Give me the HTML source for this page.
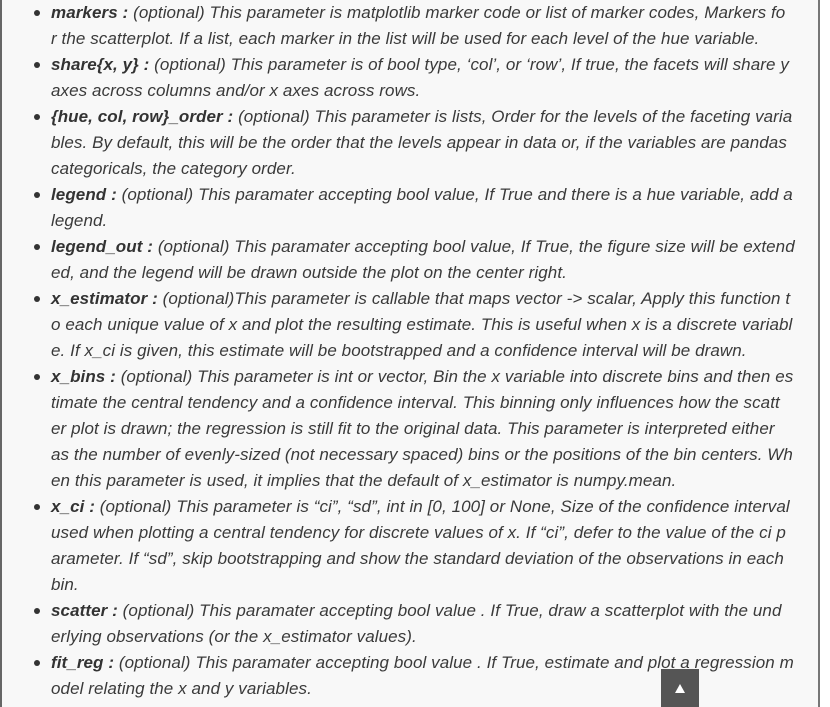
<!DOCTYPE html>
<html><head><meta charset="utf-8"><style>
html,body{margin:0;padding:0;width:830px;height:707px;overflow:hidden;}
body{background:#fff;position:relative;font-family:"Liberation Sans",sans-serif;}
.box{position:absolute;left:0;top:0;width:816px;height:707px;background:#f8f8f8;border-left:2px solid #666;border-right:2px solid #777;}
.l{position:absolute;left:51px;height:26px;line-height:26px;font-size:17px;font-style:italic;color:#3a3a3a;white-space:nowrap;letter-spacing:0.08px;}
.l b{font-weight:bold;color:#333;}
.d{position:absolute;left:-17px;top:10px;width:6px;height:6px;border-radius:50%;background:#333;}
.btn{position:absolute;left:661px;top:669px;width:38px;height:38px;background:#555;}
.btn:after{content:"";position:absolute;left:14px;top:15px;border-left:5px solid transparent;border-right:5px solid transparent;border-bottom:9px solid #fff;}
</style></head><body>
<div class="box"></div>
<div class="l" style="top:0px"><span class="d"></span><b>markers :</b> (optional) This parameter is matplotlib marker code or list of marker codes, Markers fo</div>
<div class="l" style="top:26px">r the scatterplot. If a list, each marker in the list will be used for each level of the hue variable.</div>
<div class="l" style="top:52px"><span class="d"></span><b>share{x, y} :</b> (optional) This parameter is of bool type, ‘col’, or ‘row’, If true, the facets will share y</div>
<div class="l" style="top:78px">axes across columns and/or x axes across rows.</div>
<div class="l" style="top:104px"><span class="d"></span><b>{hue, col, row}_order :</b> (optional) This parameter is lists, Order for the levels of the faceting varia</div>
<div class="l" style="top:130px">bles. By default, this will be the order that the levels appear in data or, if the variables are pandas</div>
<div class="l" style="top:156px">categoricals, the category order.</div>
<div class="l" style="top:182px"><span class="d"></span><b>legend :</b> (optional) This paramater accepting bool value, If True and there is a hue variable, add a</div>
<div class="l" style="top:208px">legend.</div>
<div class="l" style="top:234px"><span class="d"></span><b>legend_out :</b> (optional) This paramater accepting bool value, If True, the figure size will be extend</div>
<div class="l" style="top:260px">ed, and the legend will be drawn outside the plot on the center right.</div>
<div class="l" style="top:286px"><span class="d"></span><b>x_estimator :</b> (optional)This parameter is callable that maps vector -&gt; scalar, Apply this function t</div>
<div class="l" style="top:312px">o each unique value of x and plot the resulting estimate. This is useful when x is a discrete variabl</div>
<div class="l" style="top:338px">e. If x_ci is given, this estimate will be bootstrapped and a confidence interval will be drawn.</div>
<div class="l" style="top:364px"><span class="d"></span><b>x_bins :</b> (optional) This parameter is int or vector, Bin the x variable into discrete bins and then es</div>
<div class="l" style="top:390px">timate the central tendency and a confidence interval. This binning only influences how the scatt</div>
<div class="l" style="top:416px">er plot is drawn; the regression is still fit to the original data. This parameter is interpreted either</div>
<div class="l" style="top:442px">as the number of evenly-sized (not necessary spaced) bins or the positions of the bin centers. Wh</div>
<div class="l" style="top:468px">en this parameter is used, it implies that the default of x_estimator is numpy.mean.</div>
<div class="l" style="top:494px"><span class="d"></span><b>x_ci :</b> (optional) This parameter is “ci”, “sd”, int in [0, 100] or None, Size of the confidence interval</div>
<div class="l" style="top:520px">used when plotting a central tendency for discrete values of x. If “ci”, defer to the value of the ci p</div>
<div class="l" style="top:546px">arameter. If “sd”, skip bootstrapping and show the standard deviation of the observations in each</div>
<div class="l" style="top:572px">bin.</div>
<div class="l" style="top:598px"><span class="d"></span><b>scatter :</b> (optional) This paramater accepting bool value . If True, draw a scatterplot with the und</div>
<div class="l" style="top:624px">erlying observations (or the x_estimator values).</div>
<div class="l" style="top:650px"><span class="d"></span><b>fit_reg :</b> (optional) This paramater accepting bool value . If True, estimate and plot a regression m</div>
<div class="l" style="top:676px">odel relating the x and y variables.</div>
<div class="btn"></div>
</body></html>
